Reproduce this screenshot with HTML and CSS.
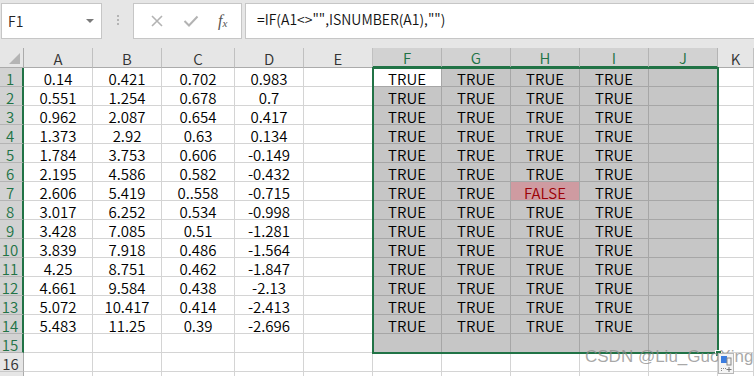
FILE: index.html
```html
<!DOCTYPE html>
<html lang="zh-CN">
<head>
  <meta charset="UTF-8">
  <title>IF ISNUMBER</title>
  <link rel="stylesheet" href="styles.css">
</head>
<body>
  <div class="xl-toolbar">
    <div class="xl-namebox">
      <span class="xl-namebox-text">F1</span>
      <span class="xl-namebox-arrow"></span>
    </div>
    <div class="xl-grip"><i></i><i></i><i></i></div>
    <div class="xl-fxbtns">
      <svg class="xl-btn" width="14" height="14" viewBox="0 0 14 14"><path d="M2 2 L12 12 M12 2 L2 12" stroke="#b3b3b3" stroke-width="1.6" fill="none"/></svg>
      <svg class="xl-btn" width="16" height="14" viewBox="0 0 16 14"><path d="M1.5 7 L6 11.5 L14.5 2.5" stroke="#b3b3b3" stroke-width="2" fill="none"/></svg>
      <span class="xl-fx">f<sub>x</sub></span>
    </div>
    <div class="xl-formula">=IF(A1&lt;&gt;"",ISNUMBER(A1),"")</div>
  </div>

  <div class="xl-sheet">
    <div class="xl-row xl-head">
      <div class="xl-corner"><span class="xl-corner-tri"></span></div>
      <div class="xl-ch">A</div><div class="xl-ch">B</div><div class="xl-ch">C</div><div class="xl-ch">D</div><div class="xl-ch">E</div>
      <div class="xl-ch on">F</div><div class="xl-ch on">G</div><div class="xl-ch on">H</div><div class="xl-ch on">I</div><div class="xl-ch on">J</div>
      <div class="xl-ch">K</div>
    </div>

    <div class="xl-row"><div class="xl-rh on">1</div><div class="xl-c">0.14</div><div class="xl-c">0.421</div><div class="xl-c">0.702</div><div class="xl-c">0.983</div><div class="xl-c"></div><div class="xl-c sel act">TRUE</div><div class="xl-c sel">TRUE</div><div class="xl-c sel">TRUE</div><div class="xl-c sel">TRUE</div><div class="xl-c sel"></div><div class="xl-c"></div></div>
    <div class="xl-row"><div class="xl-rh on">2</div><div class="xl-c">0.551</div><div class="xl-c">1.254</div><div class="xl-c">0.678</div><div class="xl-c">0.7</div><div class="xl-c"></div><div class="xl-c sel">TRUE</div><div class="xl-c sel">TRUE</div><div class="xl-c sel">TRUE</div><div class="xl-c sel">TRUE</div><div class="xl-c sel"></div><div class="xl-c"></div></div>
    <div class="xl-row"><div class="xl-rh on">3</div><div class="xl-c">0.962</div><div class="xl-c">2.087</div><div class="xl-c">0.654</div><div class="xl-c">0.417</div><div class="xl-c"></div><div class="xl-c sel">TRUE</div><div class="xl-c sel">TRUE</div><div class="xl-c sel">TRUE</div><div class="xl-c sel">TRUE</div><div class="xl-c sel"></div><div class="xl-c"></div></div>
    <div class="xl-row"><div class="xl-rh on">4</div><div class="xl-c">1.373</div><div class="xl-c">2.92</div><div class="xl-c">0.63</div><div class="xl-c">0.134</div><div class="xl-c"></div><div class="xl-c sel">TRUE</div><div class="xl-c sel">TRUE</div><div class="xl-c sel">TRUE</div><div class="xl-c sel">TRUE</div><div class="xl-c sel"></div><div class="xl-c"></div></div>
    <div class="xl-row"><div class="xl-rh on">5</div><div class="xl-c">1.784</div><div class="xl-c">3.753</div><div class="xl-c">0.606</div><div class="xl-c">-0.149</div><div class="xl-c"></div><div class="xl-c sel">TRUE</div><div class="xl-c sel">TRUE</div><div class="xl-c sel">TRUE</div><div class="xl-c sel">TRUE</div><div class="xl-c sel"></div><div class="xl-c"></div></div>
    <div class="xl-row"><div class="xl-rh on">6</div><div class="xl-c">2.195</div><div class="xl-c">4.586</div><div class="xl-c">0.582</div><div class="xl-c">-0.432</div><div class="xl-c"></div><div class="xl-c sel">TRUE</div><div class="xl-c sel">TRUE</div><div class="xl-c sel">TRUE</div><div class="xl-c sel">TRUE</div><div class="xl-c sel"></div><div class="xl-c"></div></div>
    <div class="xl-row"><div class="xl-rh on">7</div><div class="xl-c">2.606</div><div class="xl-c">5.419</div><div class="xl-c">0..558</div><div class="xl-c">-0.715</div><div class="xl-c"></div><div class="xl-c sel">TRUE</div><div class="xl-c sel">TRUE</div><div class="xl-c sel bad">FALSE</div><div class="xl-c sel">TRUE</div><div class="xl-c sel"></div><div class="xl-c"></div></div>
    <div class="xl-row"><div class="xl-rh on">8</div><div class="xl-c">3.017</div><div class="xl-c">6.252</div><div class="xl-c">0.534</div><div class="xl-c">-0.998</div><div class="xl-c"></div><div class="xl-c sel">TRUE</div><div class="xl-c sel">TRUE</div><div class="xl-c sel">TRUE</div><div class="xl-c sel">TRUE</div><div class="xl-c sel"></div><div class="xl-c"></div></div>
    <div class="xl-row"><div class="xl-rh on">9</div><div class="xl-c">3.428</div><div class="xl-c">7.085</div><div class="xl-c">0.51</div><div class="xl-c">-1.281</div><div class="xl-c"></div><div class="xl-c sel">TRUE</div><div class="xl-c sel">TRUE</div><div class="xl-c sel">TRUE</div><div class="xl-c sel">TRUE</div><div class="xl-c sel"></div><div class="xl-c"></div></div>
    <div class="xl-row"><div class="xl-rh on">10</div><div class="xl-c">3.839</div><div class="xl-c">7.918</div><div class="xl-c">0.486</div><div class="xl-c">-1.564</div><div class="xl-c"></div><div class="xl-c sel">TRUE</div><div class="xl-c sel">TRUE</div><div class="xl-c sel">TRUE</div><div class="xl-c sel">TRUE</div><div class="xl-c sel"></div><div class="xl-c"></div></div>
    <div class="xl-row"><div class="xl-rh on">11</div><div class="xl-c">4.25</div><div class="xl-c">8.751</div><div class="xl-c">0.462</div><div class="xl-c">-1.847</div><div class="xl-c"></div><div class="xl-c sel">TRUE</div><div class="xl-c sel">TRUE</div><div class="xl-c sel">TRUE</div><div class="xl-c sel">TRUE</div><div class="xl-c sel"></div><div class="xl-c"></div></div>
    <div class="xl-row"><div class="xl-rh on">12</div><div class="xl-c">4.661</div><div class="xl-c">9.584</div><div class="xl-c">0.438</div><div class="xl-c">-2.13</div><div class="xl-c"></div><div class="xl-c sel">TRUE</div><div class="xl-c sel">TRUE</div><div class="xl-c sel">TRUE</div><div class="xl-c sel">TRUE</div><div class="xl-c sel"></div><div class="xl-c"></div></div>
    <div class="xl-row"><div class="xl-rh on">13</div><div class="xl-c">5.072</div><div class="xl-c">10.417</div><div class="xl-c">0.414</div><div class="xl-c">-2.413</div><div class="xl-c"></div><div class="xl-c sel">TRUE</div><div class="xl-c sel">TRUE</div><div class="xl-c sel">TRUE</div><div class="xl-c sel">TRUE</div><div class="xl-c sel"></div><div class="xl-c"></div></div>
    <div class="xl-row"><div class="xl-rh on">14</div><div class="xl-c">5.483</div><div class="xl-c">11.25</div><div class="xl-c">0.39</div><div class="xl-c">-2.696</div><div class="xl-c"></div><div class="xl-c sel">TRUE</div><div class="xl-c sel">TRUE</div><div class="xl-c sel">TRUE</div><div class="xl-c sel">TRUE</div><div class="xl-c sel"></div><div class="xl-c"></div></div>
    <div class="xl-row"><div class="xl-rh on">15</div><div class="xl-c"></div><div class="xl-c"></div><div class="xl-c"></div><div class="xl-c"></div><div class="xl-c"></div><div class="xl-c sel"></div><div class="xl-c sel"></div><div class="xl-c sel"></div><div class="xl-c sel"></div><div class="xl-c sel"></div><div class="xl-c"></div></div>
    <div class="xl-row"><div class="xl-rh">16</div><div class="xl-c"></div><div class="xl-c"></div><div class="xl-c"></div><div class="xl-c"></div><div class="xl-c"></div><div class="xl-c"></div><div class="xl-c"></div><div class="xl-c"></div><div class="xl-c"></div><div class="xl-c"></div><div class="xl-c"></div></div>
    <div class="xl-row"><div class="xl-rh"></div><div class="xl-c"></div><div class="xl-c"></div><div class="xl-c"></div><div class="xl-c"></div><div class="xl-c"></div><div class="xl-c"></div><div class="xl-c"></div><div class="xl-c"></div><div class="xl-c"></div><div class="xl-c"></div><div class="xl-c"></div></div>

    <!-- selection frame F1:J15 -->
    <div class="xl-selection"><span class="xl-fill-handle"></span></div>
    <div class="xl-watermark">CSDN @Liu_GuoXing</div>
    <svg class="xl-paste" width="16" height="21" viewBox="0 0 16 21">
      <rect x="0.5" y="0.5" width="15" height="20" fill="#f4f4f4" stroke="#b8b8b8"/>
      <rect x="3" y="3" width="6" height="7" fill="#3b7de0"/>
      <rect x="9" y="5" width="4" height="7" fill="none" stroke="#888"/>
      <path d="M3 15.5 H9 M3 17.5 H5" stroke="#888" stroke-dasharray="1 1"/>
      <path d="M11 14 V19 M8.5 16.5 H13.5" stroke="#777"/>
    </svg>
  </div>
</body>
</html>
```

FILE: styles.css
```css
body {
  margin: 0;
  width: 754px;
  height: 376px;
  overflow: hidden;
  background: #fff;
  font-family: "Noto Sans CJK SC", "Liberation Sans", sans-serif;
}
.xl-toolbar {
  height: 48px;
  box-sizing: border-box;
  padding-top: 3px;
  background: #e6e6e6;
  display: flex;
  align-items: flex-start;
}
.xl-namebox {
  width: 101px;
  height: 36px;
  margin-left: 1px;
  box-sizing: border-box;
  border: 1px solid #c6c6c6;
  background: #fff;
  display: flex;
  align-items: center;
  justify-content: space-between;
  padding: 0 7px 0 6px;
}
.xl-namebox-text {
  font-size: 14px;
  color: #222;
  font-weight: 350;
}
.xl-namebox-arrow {
  width: 0;
  height: 0;
  border-left: 4px solid transparent;
  border-right: 4px solid transparent;
  border-top: 4px solid #7a7a7a;
}
.xl-grip {
  width: 31px;
  display: flex;
  flex-direction: column;
  align-items: center;
  gap: 2px;
  padding-top: 12px;
}
.xl-grip i {
  width: 2px;
  height: 2px;
  background: #b4b4b4;
}
.xl-fxbtns {
  width: 109px;
  height: 36px;
  box-sizing: border-box;
  border: 1px solid #c6c6c6;
  background: #fff;
  display: flex;
  align-items: center;
  justify-content: space-around;
  padding: 0 4px 0 6px;
}
.xl-fx {
  font-family: "Liberation Serif", serif;
  font-style: italic;
  font-size: 16px;
  color: #555;
  line-height: 1;
}
.xl-fx sub {
  font-size: 11px;
  vertical-align: -1px;
}
.xl-formula {
  flex: 1;
  height: 36px;
  margin-left: 3px;
  margin-right: -2px;
  box-sizing: border-box;
  border: 1px solid #c6c6c6;
  background: #fff;
  font-size: 14px;
  font-weight: 350;
  color: #111;
  padding: 5px 0 0 11px;
  line-height: 20px;
}

.xl-sheet {
  position: relative;
}
.xl-row {
  display: grid;
  grid-template-columns: 24px 69px 69px 73px 69px 69px 69px 69px 69px 69px 69px 1fr;
  grid-template-rows: 19px;
  height: 19px;
}
.xl-head {
  grid-template-rows: 20px;
  height: 20px;
}
.xl-corner,
.xl-ch,
.xl-rh {
  background: #e6e6e6;
  box-sizing: border-box;
  color: #333;
  font-size: 15px;
  font-weight: 350;
  text-align: center;
}
.xl-corner {
  position: relative;
  border-right: 1px solid #ababab;
  border-bottom: 1px solid #ababab;
}
.xl-corner-tri {
  position: absolute;
  right: 3px;
  bottom: 3px;
  width: 0;
  height: 0;
  border-left: 11px solid transparent;
  border-bottom: 11px solid #b4b4b4;
}
.xl-ch {
  border-right: 1px solid #c0c0c0;
  border-bottom: 1px solid #ababab;
  line-height: 17px;
  padding-top: 2px;
}
.xl-ch.on {
  background: #d2d2d2;
  color: #217346;
  border-right-color: #b4b4b4;
  border-bottom: 2px solid #217346;
  line-height: 16px;
}
.xl-rh {
  border-right: 1px solid #ababab;
  border-bottom: 1px solid #c8c8c8;
  line-height: 14px;
  padding: 4px 2px 0 0;
}
.xl-rh.on {
  background: #d2d2d2;
  color: #217346;
  border-right: 2px solid #217346;
  border-bottom-color: #b4b4b4;
}
.xl-c {
  box-sizing: border-box;
  border-right: 1px solid #d4d4d4;
  border-bottom: 1px solid #d4d4d4;
  font-size: 15px;
  font-weight: 350;
  line-height: 14px;
  padding-top: 4px;
  text-align: center;
  color: #000;
  white-space: nowrap;
}
.xl-c.sel {
  background: #c6c6c6;
  border-right-color: #a6a6a6;
  border-bottom-color: #a6a6a6;
}
.xl-c.act {
  background: #fff;
}
.xl-c.bad {
  background: #cf9ba1;
  color: #9c0006;
}
.xl-selection {
  position: absolute;
  left: 372px;
  top: 19px;
  width: 347px;
  height: 287px;
  box-sizing: border-box;
  border: 2px solid #217346;
}
.xl-fill-handle {
  position: absolute;
  right: -5px;
  bottom: -5px;
  width: 5px;
  height: 5px;
  background: #217346;
  border: 1px solid #fff;
}
.xl-watermark {
  position: absolute;
  left: 585px;
  top: 299px;
  font-family: "Liberation Sans", sans-serif;
  font-size: 17px;
  color: rgba(140, 140, 140, 0.75);
  white-space: nowrap;
}
.xl-paste {
  position: absolute;
  left: 718px;
  top: 305px;
}
```
